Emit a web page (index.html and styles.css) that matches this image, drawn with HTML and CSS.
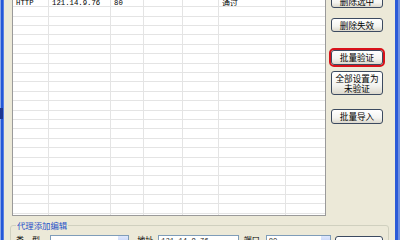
FILE: index.html
```html
<!DOCTYPE html>
<html lang="zh-CN">
<head>
    <meta charset="UTF-8">
    <title>代理管理</title>
    <link rel="stylesheet" href="styles.css">
</head>
<body>

<div class="window">
    <div class="frame-left"><span class="edge-mark"></span></div>

    <div class="client">
        <div class="top">
            <div class="list">
                <div class="row">
                    <div class="cell">HTTP</div>
                    <div class="cell">121.14.9.76</div>
                    <div class="cell">80</div>
                    <div class="cell"></div>
                    <div class="cell"></div>
                    <div class="cell cn">通过</div>
                    <div class="cell"></div>
                </div>
                <!-- empty rows -->
                <div class="row"><div class="cell"></div><div class="cell"></div><div class="cell"></div><div class="cell"></div><div class="cell"></div><div class="cell"></div><div class="cell"></div></div>
                <div class="row"><div class="cell"></div><div class="cell"></div><div class="cell"></div><div class="cell"></div><div class="cell"></div><div class="cell"></div><div class="cell"></div></div>
                <div class="row"><div class="cell"></div><div class="cell"></div><div class="cell"></div><div class="cell"></div><div class="cell"></div><div class="cell"></div><div class="cell"></div></div>
                <div class="row"><div class="cell"></div><div class="cell"></div><div class="cell"></div><div class="cell"></div><div class="cell"></div><div class="cell"></div><div class="cell"></div></div>
                <div class="row"><div class="cell"></div><div class="cell"></div><div class="cell"></div><div class="cell"></div><div class="cell"></div><div class="cell"></div><div class="cell"></div></div>
                <div class="row"><div class="cell"></div><div class="cell"></div><div class="cell"></div><div class="cell"></div><div class="cell"></div><div class="cell"></div><div class="cell"></div></div>
                <div class="row"><div class="cell"></div><div class="cell"></div><div class="cell"></div><div class="cell"></div><div class="cell"></div><div class="cell"></div><div class="cell"></div></div>
                <div class="row"><div class="cell"></div><div class="cell"></div><div class="cell"></div><div class="cell"></div><div class="cell"></div><div class="cell"></div><div class="cell"></div></div>
                <div class="row"><div class="cell"></div><div class="cell"></div><div class="cell"></div><div class="cell"></div><div class="cell"></div><div class="cell"></div><div class="cell"></div></div>
                <div class="row"><div class="cell"></div><div class="cell"></div><div class="cell"></div><div class="cell"></div><div class="cell"></div><div class="cell"></div><div class="cell"></div></div>
                <div class="row"><div class="cell"></div><div class="cell"></div><div class="cell"></div><div class="cell"></div><div class="cell"></div><div class="cell"></div><div class="cell"></div></div>
                <div class="row"><div class="cell"></div><div class="cell"></div><div class="cell"></div><div class="cell"></div><div class="cell"></div><div class="cell"></div><div class="cell"></div></div>
                <div class="row"><div class="cell"></div><div class="cell"></div><div class="cell"></div><div class="cell"></div><div class="cell"></div><div class="cell"></div><div class="cell"></div></div>
                <div class="row"><div class="cell"></div><div class="cell"></div><div class="cell"></div><div class="cell"></div><div class="cell"></div><div class="cell"></div><div class="cell"></div></div>
                <div class="row"><div class="cell"></div><div class="cell"></div><div class="cell"></div><div class="cell"></div><div class="cell"></div><div class="cell"></div><div class="cell"></div></div>
                <div class="row"><div class="cell"></div><div class="cell"></div><div class="cell"></div><div class="cell"></div><div class="cell"></div><div class="cell"></div><div class="cell"></div></div>
                <div class="row"><div class="cell"></div><div class="cell"></div><div class="cell"></div><div class="cell"></div><div class="cell"></div><div class="cell"></div><div class="cell"></div></div>
                <div class="row"><div class="cell"></div><div class="cell"></div><div class="cell"></div><div class="cell"></div><div class="cell"></div><div class="cell"></div><div class="cell"></div></div>
                <div class="row"><div class="cell"></div><div class="cell"></div><div class="cell"></div><div class="cell"></div><div class="cell"></div><div class="cell"></div><div class="cell"></div></div>
                <div class="row"><div class="cell"></div><div class="cell"></div><div class="cell"></div><div class="cell"></div><div class="cell"></div><div class="cell"></div><div class="cell"></div></div>
                <div class="row"><div class="cell"></div><div class="cell"></div><div class="cell"></div><div class="cell"></div><div class="cell"></div><div class="cell"></div><div class="cell"></div></div>
                <div class="row"><div class="cell"></div><div class="cell"></div><div class="cell"></div><div class="cell"></div><div class="cell"></div><div class="cell"></div><div class="cell"></div></div>
                <div class="row"><div class="cell"></div><div class="cell"></div><div class="cell"></div><div class="cell"></div><div class="cell"></div><div class="cell"></div><div class="cell"></div></div>
            </div>

            <div class="side">
                <button class="btn b-del-sel">删除选中</button>
                <button class="btn b-del-bad">删除失效</button>
                <button class="btn b-verify marked">批量验证</button>
                <button class="btn b-reset">全部设置为<br>未验证</button>
                <button class="btn b-import">批量导入</button>
            </div>
        </div>

        <fieldset class="group">
            <legend>代理添加编辑</legend>
            <div class="fields">
                <span class="lbl lbl-type">类　型</span>
                <div class="combo"><span class="combo-arrow"></span></div>
                <span class="lbl lbl-addr">地址</span>
                <div class="text-in in-addr">121.14.9.76</div>
                <span class="lbl lbl-port">端口</span>
                <div class="text-in in-port">80<span class="spin"></span></div>
                <button class="btn b-save"></button>
            </div>
        </fieldset>
    </div>

    <div class="frame-right"></div>
</div>

</body>
</html>
```

FILE: styles.css
```css
body {
    margin: 0;
    padding: 0;
    background: #ece9d8;
    font-family: "Noto Sans CJK SC", sans-serif;
    overflow: hidden;
}
.window {
    display: flex;
    width: 400px;
    height: 240px;
    overflow: hidden;
    background: #ece9d8;
}
.frame-left {
    width: 4px;
    flex-shrink: 0;
    background: linear-gradient(to right, #8aa6e8 0 1px, #2458d8 1px 3px, #5b80e0 3px);
    display: flex;
    flex-direction: column;
}
.edge-mark {
    display: block;
    width: 3px;
    height: 11px;
    margin-top: 108px;
    background: #1d3590;
}
.frame-right {
    width: 6px;
    flex-shrink: 0;
    background: linear-gradient(to right, #ece9d8 0 1px, #2a5ad8 1px 4px, #6e8fe0 4px);
}
.client {
    width: 390px;
    display: flex;
    flex-direction: column;
}
.top {
    display: flex;
    height: 222px;
    margin-top: -6px;
    flex-shrink: 0;
}

/* list view */
.list {
    width: 314px;
    margin-left: 8px;
    box-sizing: border-box;
    border: 1px solid #9a9a9a;
    border-top: none;
    background: #fff;
    padding-top: 3.9px;
    overflow: hidden;
}
.row {
    display: grid;
    grid-template-columns: 36px 62px 33px 39px 36px 67px 1fr;
    height: 9.4px;
    box-sizing: border-box;
    border-bottom: 1px solid #e4e4e4;
}
.cell {
    border-right: 1px solid #e4e4e4;
    font-family: "Liberation Mono", monospace;
    font-size: 7.3px;
    line-height: 10.5px;
    color: #000;
    padding-left: 3px;
    white-space: nowrap;
    overflow: hidden;
}
.cell:last-child {
    border-right: none;
}
.cell.cn {
    font-family: "Noto Sans CJK SC", sans-serif;
    font-size: 8px;
    line-height: 9.5px;
}

/* right buttons */
.side {
    width: 68px;
    display: flex;
    flex-direction: column;
    align-items: flex-start;
}
.btn {
    width: 52px;
    margin: 0 0 0 5px;
    padding: 0;
    box-sizing: border-box;
    border: 1px solid #3c4a60;
    border-radius: 3px;
    background: linear-gradient(to bottom, #ffffff 0%, #f4f4f0 60%, #dcd8cc 100%);
    font-family: "Noto Sans CJK SC", sans-serif;
    font-size: 8.6px;
    line-height: 9px;
    color: #000;
}
.b-del-sel {
    height: 13px;
    margin-top: 1px;
}
.b-del-bad {
    height: 14px;
    margin-top: 10px;
}
.b-verify {
    height: 15px;
    margin-top: 18px;
}
.marked {
    outline: 2px solid #d8121a;
    outline-offset: 0;
}
.b-reset {
    height: 24px;
    margin-top: 6px;
    line-height: 10.5px;
}
.b-import {
    height: 15px;
    margin-top: 14px;
}

/* group box */
.group {
    margin: 4px 5px 0 6px;
    padding: 0 5px;
    border: 1px solid #d0d0bf;
    border-radius: 3px;
    min-width: 0;
}
.group legend {
    padding: 0 1px;
    margin-left: 0;
    font-size: 8.4px;
    line-height: 10px;
    color: #1f4fc8;
}
.fields {
    display: flex;
    align-items: flex-start;
    margin-top: 5px;
    height: 14px;
}
.lbl {
    font-size: 8px;
    line-height: 10px;
    color: #000;
}
.lbl-type {
    width: 30px;
}
.combo {
    width: 80px;
    height: 13px;
    margin-left: 4px;
    box-sizing: border-box;
    border: 1px solid #7f9db9;
    background: #fff;
    display: flex;
    justify-content: flex-end;
}
.combo-arrow {
    width: 10px;
    background: linear-gradient(to bottom, #dfe8fd, #b4c8f6);
}
.lbl-addr {
    width: 18px;
    margin-left: 8px;
}
.text-in {
    height: 13px;
    box-sizing: border-box;
    border: 1px solid #7f9db9;
    background: #fff;
    font-family: "Liberation Mono", monospace;
    font-size: 7.2px;
    line-height: 10px;
    padding-left: 2px;
    color: #222;
    display: flex;
}
.in-addr {
    width: 81px;
    margin-left: 3px;
}
.lbl-port {
    width: 18px;
    margin-left: 5px;
}
.in-port {
    width: 66px;
    margin-left: 4px;
}
.spin {
    width: 9px;
    margin-left: auto;
    background: linear-gradient(to bottom, #dfe8fd, #b4c8f6);
}
.b-save {
    width: 48px;
    height: 14px;
    margin-left: 4px;
    margin-top: 1px;
}
```
